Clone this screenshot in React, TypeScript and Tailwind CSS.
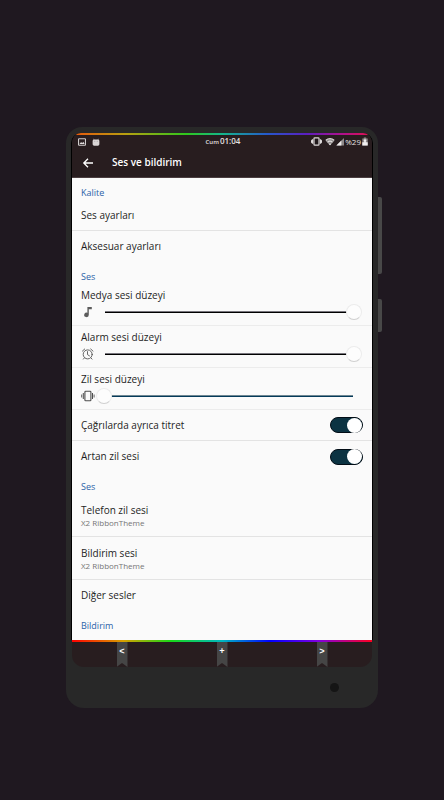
import { useState } from "react";
import type { ReactNode } from "react";

function SectionTitle({ children }: { children: ReactNode }) {
  return (
    <h2 className="h-[22px] px-[9px] pt-2 text-[9px] leading-[14px] text-[#2a62a8]">
      {children}
    </h2>
  );
}

function Row({ title, divider }: { title: string; divider?: boolean }) {
  return (
    <button
      className={
        divider
          ? "flex h-[31px] w-full items-center border-b border-[#e3e3e3] px-[9px] text-left"
          : "flex h-[31px] w-full items-center px-[9px] text-left"
      }
    >
      {title}
    </button>
  );
}

function SoundRow({ title, value }: { title: string; value: string }) {
  return (
    <button className="block h-[43px] w-full border-b border-[#e3e3e3] px-[9px] text-left">
      <span className="block leading-[14px]">{title}</span>
      <span className="block text-[8px] leading-[11px] text-[#757575]">{value}</span>
    </button>
  );
}

function VolumeRow({ id, title, icon, initial, muted }: {
  id: string;
  title: string;
  icon: ReactNode;
  initial: number;
  muted?: boolean;
}) {
  const [value, setValue] = useState(initial);

  return (
    <div className="h-[42px] border-b border-[#ececec] pt-1 pr-[10px] pl-[9px]">
      <label htmlFor={id} className="block leading-[14px]">{title}</label>
      <div className="flex h-5 items-center gap-px">
        {icon}
        <input
          id={id}
          type="range"
          min={0}
          max={100}
          value={value}
          onChange={(e) => setValue(Number(e.target.value))}
          className={`h-4 min-w-0 flex-1 appearance-none bg-[length:calc(100%-18px)_2px] bg-center bg-no-repeat [&::-webkit-slider-thumb]:size-4 [&::-webkit-slider-thumb]:appearance-none [&::-webkit-slider-thumb]:rounded-full [&::-webkit-slider-thumb]:border [&::-webkit-slider-thumb]:border-[#ececec] [&::-webkit-slider-thumb]:border-b-[#d0d0d0] [&::-webkit-slider-thumb]:bg-[#fdfdfd] ${
            muted
              ? "bg-[linear-gradient(#6f8792_50%,#043a5a_50%)]"
              : "bg-[linear-gradient(#77757c_50%,#000_50%)]"
          }`}
        />
      </div>
    </div>
  );
}

function ToggleRow({ title, divider }: { title: string; divider?: boolean }) {
  const [checked, setChecked] = useState(true);

  return (
    <label
      className={
        divider
          ? "flex h-[31px] items-center justify-between border-b border-[#e3e3e3] px-[9px]"
          : "flex h-[31px] items-center justify-between px-[9px]"
      }
    >
      {title}
      <input
        type="checkbox"
        checked={checked}
        onChange={() => setChecked(!checked)}
        className="flex h-4 w-[33px] appearance-none items-center rounded-full border border-[#020d16] bg-[#8a9499] before:size-[15px] before:rounded-full before:bg-white checked:justify-end checked:bg-[#0c3342]"
      />
    </label>
  );
}

function NavButton({ label, children }: { label: string; children: ReactNode }) {
  return (
    <button
      aria-label={label}
      className="h-full w-[11px] justify-self-center bg-[#454545] pb-1 text-center font-mono text-[9px] leading-none font-bold text-white [clip-path:polygon(0_0,100%_0,100%_100%,50%_84%,0_100%)]"
    >
      {children}
    </button>
  );
}

function NoteIcon() {
  return (
    <svg viewBox="0 0 14 14" className="size-[14px] shrink-0" fill="#5c5c5c">
      <path d="M6.4 2h4.4v2.2H7.8v5.6A2.3 2.3 0 1 1 6.4 7.7Z" />
    </svg>
  );
}

function AlarmIcon() {
  return (
    <svg viewBox="0 0 14 14" className="size-[14px] shrink-0" fill="none" stroke="#555" strokeWidth="0.9" strokeLinecap="round">
      <circle cx="6.7" cy="7.4" r="4.5" />
      <path d="M6.5 4.6v3l2 1.3M1.4 4.1 3.7 2M12 4.1 9.7 2M3.4 10.9l-1 1.2M10 10.9l1 1.2" />
    </svg>
  );
}

function RingerIcon() {
  return (
    <svg viewBox="0 0 14 14" className="size-[14px] shrink-0" fill="none" stroke="#4d4d4d">
      <rect x="3.9" y="2.3" width="6" height="9.4" rx="0.8" strokeWidth="1.1" />
      <path d="M2.3 4v6M11.5 4v6" strokeWidth="1" />
      <path d="M0.7 5.5v3M13.1 5.5v3" strokeWidth="0.9" />
    </svg>
  );
}

function StatusBar() {
  return (
    <div className="grid h-3 grid-cols-3 items-center pr-1 pl-[6px] text-[#e6e2e2]">
      <div className="flex items-center gap-[6px]">
        <svg viewBox="0 0 9 9" className="size-2">
          <rect x="0.6" y="0.9" width="7.8" height="7.2" rx="0.6" fill="#2b2022" stroke="#d0cccc" strokeWidth="1.2" />
          <path d="M1.7 6.8 3.5 4.6l1.2 1.2 1.2-1.6 1.6 2.6Z" fill="#e6e2e2" />
        </svg>
        <svg viewBox="0 0 8 9" className="size-2" fill="#d9d5d5">
          <path d="M1.2.6 2.2 1.8h3.6L6.8.6v1.5l1 .8v4.4L6.6 8.6H1.4L.2 7.3V2.9l1-.8Z" />
          <circle cx="2.7" cy="3.6" r="0.5" fill="#8b8586" />
          <circle cx="5.3" cy="3.6" r="0.5" fill="#8b8586" />
        </svg>
      </div>
      <p className="flex items-baseline justify-center gap-px text-[8px] leading-3 font-semibold">
        <span className="text-[6px]">Cum</span>
        01:04
      </p>
      <div className="flex items-center justify-end gap-px">
        <svg viewBox="0 0 11 9" className="mr-0.5 h-[9px] w-[11px]" fill="#dedada">
          <rect x="3" y="0.8" width="5" height="7.4" rx="0.8" fill="#20181a" stroke="#dedada" strokeWidth="1.2" />
          <path d="M1.2 2.2h1v4.6h-1L0 5.6V3.4ZM9.8 2.2h-1v4.6h1L11 5.6V3.4Z" />
        </svg>
        <svg viewBox="0 0 10 9" className="h-[9px] w-[10px]" fill="#dedada">
          <path d="M.4 3.6a6.4 6.4 0 0 1 9.2 0L5 8.4Z" fill="#8e8989" />
          <path d="M.9 3.2a6 6 0 0 1 8.2 0M2.6 5.2a3.6 3.6 0 0 1 4.8 0" fill="none" stroke="#dedada" strokeWidth="1.2" />
          <circle cx="5" cy="7.2" r="0.9" />
        </svg>
        <svg viewBox="0 0 8 9" className="h-[9px] w-2">
          <path d="M8 1v7.4H.4Z" fill="#8e8989" />
          <path d="M5.4 3.6v4.8H.4Z" fill="#efecec" />
        </svg>
        <span className="text-[8px] leading-3">%29</span>
        <svg viewBox="0 0 6 9" className="h-[9px] w-[6px]">
          <path d="M1.8.6h2.4v.8h1.5v7.2H.3V1.4h1.5Z" fill="#8e8989" />
          <path d="M3 2.2a1.3 1.3 0 0 1 .8 2.3v.8h1.9v3.3H.3V5.3h1.9v-.8A1.3 1.3 0 0 1 3 2.2Z" fill="#f2f0f0" />
        </svg>
      </div>
    </div>
  );
}

export default function App() {
  return (
    <main className="min-h-screen bg-[#1f1820] px-[66px] pt-[127px] pb-4 font-['Open_Sans','Noto_Sans',sans-serif] text-[10px] text-[#1e1e1e]">
      <div className="relative rounded-t-[16px] rounded-b-[18px] bg-[#282828] px-[5px] pt-[6px]">
        <div className="absolute top-[70px] -right-1 h-[77px] w-1 rounded-r-xs bg-[#484848]" />
        <div className="absolute top-[172px] -right-1 h-[33px] w-1 rounded-r-xs bg-[#484848]" />

        <div className="overflow-hidden rounded-t-[10px] border-x border-black">
          <header className="h-[45px] border-b border-[#4b3e40] bg-[#281d1f]">
            <div className="h-0.5 bg-[linear-gradient(90deg,#e8560c,#b8a010_18%,#2fc81c_38%,#14b78c_50%,#2559cc_65%,#5a1fc0_78%,#b0108c_90%,#e0104c)]" />
            <StatusBar />
            <div className="flex h-[31px] items-center gap-[18px] pl-[10px] text-white">
              <button aria-label="Geri">
                <svg viewBox="0 0 12 12" className="size-3" fill="none" stroke="#fff" strokeWidth="1.3">
                  <path d="M11 6H1.8M6 1.8 1.8 6 6 10.2" />
                </svg>
              </button>
              <h1 className="text-[10px] font-semibold">Ses ve bildirim</h1>
            </div>
          </header>

          <div className="bg-[#fafafa] pb-[7px]">
            <SectionTitle>Kalite</SectionTitle>
            <Row title="Ses ayarları" divider />
            <Row title="Aksesuar ayarları" />

            <SectionTitle>Ses</SectionTitle>
            <VolumeRow id="media" title="Medya sesi düzeyi" icon={<NoteIcon />} initial={100} />
            <VolumeRow id="alarm" title="Alarm sesi düzeyi" icon={<AlarmIcon />} initial={100} />
            <VolumeRow id="ring" title="Zil sesi düzeyi" icon={<RingerIcon />} initial={0} muted />
            <ToggleRow title="Çağrılarda ayrıca titret" divider />
            <ToggleRow title="Artan zil sesi" />

            <SectionTitle>Ses</SectionTitle>
            <SoundRow title="Telefon zil sesi" value="X2 RibbonTheme" />
            <SoundRow title="Bildirim sesi" value="X2 RibbonTheme" />
            <Row title="Diğer sesler" />

            <SectionTitle>Bildirim</SectionTitle>
          </div>
        </div>

        <nav className="mx-px overflow-hidden rounded-b-[12px] bg-[#281d1f]">
          <div className="h-0.5 bg-[linear-gradient(90deg,#ff0000,#d8a000_17%,#18d818_33%,#00b8c0_50%,#0000ff_66%,#8000e0_82%,#ff0020)]" />
          <div className="grid h-[25px] grid-cols-3">
            <NavButton label="Geri">{"<"}</NavButton>
            <NavButton label="Ana ekran">+</NavButton>
            <NavButton label="Son uygulamalar">{">"}</NavButton>
          </div>
        </nav>

        <div className="flex h-[41px] items-center justify-end pr-[34px]">
          <span className="size-[9px] rounded-full bg-[#151515]" />
        </div>
      </div>
    </main>
  );
}
